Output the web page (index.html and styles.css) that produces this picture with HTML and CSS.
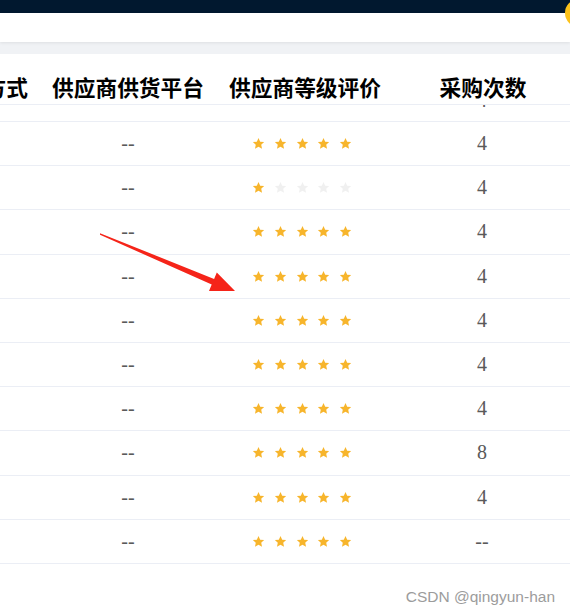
FILE: index.html
```html
<!DOCTYPE html>
<html lang="zh-CN">
<head>
<meta charset="utf-8">
<title>供应商列表</title>
<link rel="stylesheet" href="styles.css">
</head>
<body>
<svg width="0" height="0" class="defs">
  <defs>
    <symbol id="star" viewBox="0 0 24 24"><path d="M12 1.8l3.1 6.8 7.3.8-5.4 5 1.5 7.3L12 18l-6.5 3.7 1.5-7.3-5.4-5 7.3-.8z"/></symbol>
  </defs>
</svg>
<div class="page">
  <header class="topbar"></header>
  <div class="subbar"><span class="avatar"></span></div>
  <div class="gap"></div>
  <section class="card">
    <div class="table">
      <div class="thead row">
        <div class="cell c0"><span>方式</span></div>
        <div class="cell c1">供应商供货平台</div>
        <div class="cell c2">供应商等级评价</div>
        <div class="cell c3">采购次数</div>
      </div>
      <div class="tbody">
        <div class="clip">
          <div class="row tr hidden-top">
            <div class="cell c0"></div>
            <div class="cell c1"></div>
            <div class="cell c2"></div>
            <div class="cell c3">4</div>
          </div>
        </div>
        <div class="row tr"><div class="cell c0"></div><div class="cell c1">--</div><div class="cell c2"><span class="rate"><svg class="s on"><use href="#star"/></svg><svg class="s on"><use href="#star"/></svg><svg class="s on"><use href="#star"/></svg><svg class="s on"><use href="#star"/></svg><svg class="s on"><use href="#star"/></svg></span></div><div class="cell c3">4</div></div>
        <div class="row tr"><div class="cell c0"></div><div class="cell c1">--</div><div class="cell c2"><span class="rate"><svg class="s on"><use href="#star"/></svg><svg class="s"><use href="#star"/></svg><svg class="s"><use href="#star"/></svg><svg class="s"><use href="#star"/></svg><svg class="s"><use href="#star"/></svg></span></div><div class="cell c3">4</div></div>
        <div class="row tr"><div class="cell c0"></div><div class="cell c1">--</div><div class="cell c2"><span class="rate"><svg class="s on"><use href="#star"/></svg><svg class="s on"><use href="#star"/></svg><svg class="s on"><use href="#star"/></svg><svg class="s on"><use href="#star"/></svg><svg class="s on"><use href="#star"/></svg></span></div><div class="cell c3">4</div></div>
        <div class="row tr"><div class="cell c0"></div><div class="cell c1">--</div><div class="cell c2"><span class="rate"><svg class="s on"><use href="#star"/></svg><svg class="s on"><use href="#star"/></svg><svg class="s on"><use href="#star"/></svg><svg class="s on"><use href="#star"/></svg><svg class="s on"><use href="#star"/></svg></span></div><div class="cell c3">4</div></div>
        <div class="row tr"><div class="cell c0"></div><div class="cell c1">--</div><div class="cell c2"><span class="rate"><svg class="s on"><use href="#star"/></svg><svg class="s on"><use href="#star"/></svg><svg class="s on"><use href="#star"/></svg><svg class="s on"><use href="#star"/></svg><svg class="s on"><use href="#star"/></svg></span></div><div class="cell c3">4</div></div>
        <div class="row tr"><div class="cell c0"></div><div class="cell c1">--</div><div class="cell c2"><span class="rate"><svg class="s on"><use href="#star"/></svg><svg class="s on"><use href="#star"/></svg><svg class="s on"><use href="#star"/></svg><svg class="s on"><use href="#star"/></svg><svg class="s on"><use href="#star"/></svg></span></div><div class="cell c3">4</div></div>
        <div class="row tr"><div class="cell c0"></div><div class="cell c1">--</div><div class="cell c2"><span class="rate"><svg class="s on"><use href="#star"/></svg><svg class="s on"><use href="#star"/></svg><svg class="s on"><use href="#star"/></svg><svg class="s on"><use href="#star"/></svg><svg class="s on"><use href="#star"/></svg></span></div><div class="cell c3">4</div></div>
        <div class="row tr"><div class="cell c0"></div><div class="cell c1">--</div><div class="cell c2"><span class="rate"><svg class="s on"><use href="#star"/></svg><svg class="s on"><use href="#star"/></svg><svg class="s on"><use href="#star"/></svg><svg class="s on"><use href="#star"/></svg><svg class="s on"><use href="#star"/></svg></span></div><div class="cell c3">8</div></div>
        <div class="row tr"><div class="cell c0"></div><div class="cell c1">--</div><div class="cell c2"><span class="rate"><svg class="s on"><use href="#star"/></svg><svg class="s on"><use href="#star"/></svg><svg class="s on"><use href="#star"/></svg><svg class="s on"><use href="#star"/></svg><svg class="s on"><use href="#star"/></svg></span></div><div class="cell c3">4</div></div>
        <div class="row tr"><div class="cell c0"></div><div class="cell c1">--</div><div class="cell c2"><span class="rate"><svg class="s on"><use href="#star"/></svg><svg class="s on"><use href="#star"/></svg><svg class="s on"><use href="#star"/></svg><svg class="s on"><use href="#star"/></svg><svg class="s on"><use href="#star"/></svg></span></div><div class="cell c3">--</div></div>
      </div>
    </div>
  </section>
  <svg class="arrow" width="570" height="615" viewBox="0 0 570 615">
    <polygon points="100,233.2 214.1,278.9 216.8,272.5 235,291 209,290.9 211.7,284.5 100,234.8"/>
  </svg>
  <div class="watermark">CSDN @qingyun-han</div>
</div>
</body>
</html>
```

FILE: styles.css
```css
html, body {
  margin: 0;
  padding: 0;
  overflow: hidden;
  background: #ffffff;
}

.defs {
  position: absolute;
  width: 0;
  height: 0;
}

.page {
  position: relative;
  width: 570px;
  height: 615px;
  overflow: hidden;
  background: #ffffff;
}

.topbar {
  height: 13px;
  background: #01182f;
}

.subbar {
  position: relative;
  height: 29px;
  background: #ffffff;
  box-shadow: 0 1px 3px rgba(0, 0, 0, 0.08);
  z-index: 1;
}

.avatar {
  position: absolute;
  left: 565px;
  top: -14px;
  width: 28px;
  height: 28px;
  border-radius: 50%;
  background: #fcc21b;
}

.gap {
  height: 12px;
  background: #f0f2f5;
}

.card {
  background: #ffffff;
}

.table {
  width: 578px;
}

.row {
  display: flex;
}

.cell {
  display: flex;
  justify-content: center;
  align-items: center;
  box-sizing: border-box;
  white-space: nowrap;
}

.c0 { width: 40px; justify-content: flex-end; padding-right: 12px; }
.c1 { width: 176px; }
.c2 { width: 172px; }
.c3 { width: 188px; }

.thead {
  height: 51px;
  border-bottom: 1px solid #ebeef5;
  box-sizing: border-box;
  font-family: "Noto Sans CJK SC", "Noto Sans", sans-serif;
  font-weight: 700;
  font-size: 21.7px;
  line-height: 22px;
  color: #000000;
}

.thead .cell {
  align-items: flex-end;
  padding-bottom: 6px;
}

.thead .c2 { padding-left: 6px; }
.thead .c3 { padding-left: 2px; }

.clip {
  height: 17px;
  overflow: hidden;
  border-bottom: 1px solid #ebeef5;
  box-sizing: border-box;
}

.hidden-top {
  margin-top: -26px;
}

.tr {
  height: 44.2px;
  box-sizing: border-box;
  border-bottom: 1px solid #ebeef5;
  font-family: "Liberation Serif", "DejaVu Serif", serif;
  font-size: 20px;
  color: #5a5a5a;
}

.rate {
  display: flex;
  gap: 8.7px;
}

.s {
  width: 13px;
  height: 13px;
  fill: #f0f0f0;
}

.s.on {
  fill: #f7b52c;
}

.arrow {
  position: absolute;
  left: 0;
  top: 0;
  pointer-events: none;
  fill: #f52419;
}

.watermark {
  position: absolute;
  right: 15px;
  top: 587px;
  font-family: "Liberation Sans", Arial, sans-serif;
  font-size: 15.5px;
  line-height: 20px;
  color: #9c9c9c;
}
```
